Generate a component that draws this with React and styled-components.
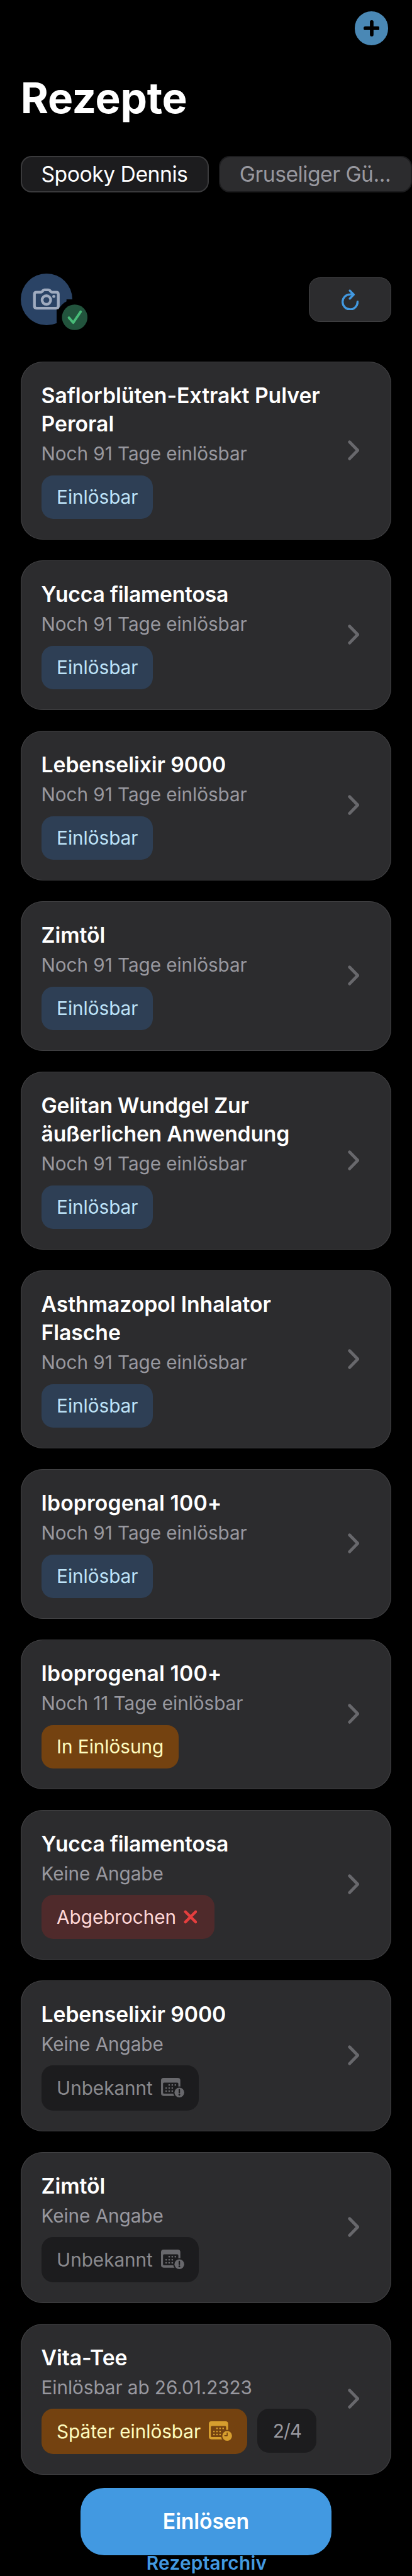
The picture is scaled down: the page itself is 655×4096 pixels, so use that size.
import React from 'react';
import styled, { createGlobalStyle } from 'styled-components';

/* All sizes are in design pixels of a 960px wide canvas. */
const u = (n) => `${(n * 0.68267).toFixed(3)}px`;

const GlobalStyle = createGlobalStyle`
  html, body { margin: 0; padding: 0; background: #000; }
  body { font-family: Inter, "Liberation Sans", sans-serif; overflow: hidden; }
  *, *::before, *::after { box-sizing: border-box; }
  svg { display: block; flex: none; }
  button { font: inherit; border: 0; padding: 0; margin: 0; }
  h1, h2, p { margin: 0; }
`;

const Screen = styled.div`
  width: 100%;
  height: ${u(6000)};
  display: flex;
  flex-direction: column;
  overflow: hidden;
  background: #000;
  color: #fff;
`;

const NavBar = styled.header`
  display: flex;
  justify-content: flex-end;
  padding: ${u(27)} ${u(55)} 0 0;
`;

const AddButton = styled.button`
  width: ${u(79)};
  height: ${u(79)};
  display: flex;
  align-items: center;
  justify-content: center;
  border-radius: 50%;
  background: #4a88b5;
`;

const PageTitle = styled.h1`
  margin: ${u(63)} 0 0 ${u(48)};
  font-size: ${u(98.8)};
  line-height: ${u(120)};
  font-weight: 700;
  letter-spacing: -0.004em;
`;

const ProfileTabs = styled.nav`
  display: flex;
  gap: ${u(24)};
  margin-top: ${u(75)};
  padding-left: ${u(48)};
`;

const ProfileTab = styled.button`
  flex: none;
  width: ${(p) => u(p.$selected ? 438 : 449.5)};
  height: ${u(85)};
  padding-left: ${u(45)};
  border: ${u(3)} solid ${(p) => (p.$selected ? '#3a3a3c' : '#1c1c1e')};
  border-radius: ${u(25)};
  background: ${(p) => (p.$selected ? '#1c1c1e' : '#2c2c2e')};
  color: ${(p) => (p.$selected ? '#fff' : '#98989f')};
  font-size: ${u(49.4)};
  line-height: ${u(79)};
  letter-spacing: -0.015em;
  text-align: left;
  white-space: nowrap;
`;

const StatusRow = styled.div`
  display: flex;
  justify-content: space-between;
  align-items: center;
  height: ${u(120)};
  margin-top: ${u(189)};
  padding: 0 ${u(48)};
`;

const Avatar = styled.div`
  position: relative;
  width: ${u(120)};
  height: ${u(120)};
  border-radius: 50%;
  background: #2a4365;
`;

const AvatarBadge = styled.svg`
  position: absolute;
  left: ${u(84)};
  top: ${u(60)};
`;

const RefreshButton = styled.button`
  width: ${u(192)};
  height: ${u(104)};
  display: flex;
  align-items: center;
  justify-content: center;
  border: 1px solid #444446;
  border-radius: ${u(26)};
  background: #2c2c2e;
`;

const CardList = styled.main`
  display: flex;
  flex-direction: column;
  gap: ${u(48)};
  margin-top: ${u(84)};
  padding: 0 ${u(48)};
`;

const Card = styled.article`
  display: flex;
  align-items: center;
  justify-content: space-between;
  padding: ${u(46)} ${u(75)} ${u(48)} ${u(48)};
  border-radius: ${u(51)};
  background: #2c2c2e;
  box-shadow: inset 0 0 0 1px #414143;
`;

const CardBody = styled.div`
  width: ${u(672)};
`;

const CardTitle = styled.h2`
  font-size: ${u(49.4)};
  line-height: ${u(66)};
  font-weight: 600;
  letter-spacing: ${(p) => p.$tracking ?? -0.002}em;
`;

const CardHint = styled.p`
  margin-top: ${u(7)};
  color: #98989f;
  font-size: ${u(43.6)};
  line-height: ${u(60)};
  letter-spacing: -0.003em;
`;

const TagRow = styled.div`
  display: flex;
  align-items: flex-start;
  gap: ${u(24)};
  margin-top: ${u(20)};
`;

const tones = {
  blue: ['#2e3f55', '#bee3f8'],
  orange: ['#744210', '#fefcbf'],
  red: ['#4f2a2b', '#fed7d7'],
  gray: ['#1c1c1e', '#8a8a8e'],
  count: ['#1c1c1e', '#98989f'],
};

const Tag = styled.span`
  display: flex;
  align-items: center;
  height: ${(p) => u(p.$tall ? 105 : 102)};
  padding: 0 ${(p) => u(p.$tone === 'red' ? 40 : 35)} 0 ${u(36)};
  gap: ${(p) => u(p.$tone === 'red' ? 17 : 19)};
  border-radius: ${u(27)};
  background: ${(p) => tones[p.$tone][0]};
  color: ${(p) => tones[p.$tone][1]};
  font-size: ${u(43.6)};
  letter-spacing: ${(p) => (p.$tone === 'count' ? '-0.03em' : '-0.002em')};
  white-space: nowrap;
`;

const RedeemButton = styled.button`
  align-self: center;
  width: ${u(585)};
  height: ${u(156)};
  flex: none;
  margin-top: ${u(31)};
  border-radius: ${u(55)};
  background: #4299e1;
  color: #fff;
  font-size: ${u(49.4)};
  line-height: ${u(156)};
  font-weight: 600;
  letter-spacing: -0.004em;
  text-align: center;
`;

const ArchiveLink = styled.div`
  height: ${u(48)};
  padding-left: ${u(3)};
  color: #4299e1;
  font-size: ${u(43.6)};
  line-height: ${u(38)};
  font-weight: 600;
  letter-spacing: 0.009em;
  text-align: center;
`;

const dim = (w, h) => ({ width: w * 0.68267, height: h * 0.68267 });

const PlusIcon = () => (
  <svg {...dim(38, 38)} viewBox="0 0 38 38" stroke="#000" strokeWidth="8.4" strokeLinecap="round">
    <path d="M19 4.2V33.8M4.2 19H33.8" />
  </svg>
);

const CameraIcon = () => (
  <svg {...dim(120, 120)} viewBox="55 54 360 360" fill="none" stroke="#9fabbf" strokeWidth="19" strokeLinejoin="round">
    <path d="M165 184.500H192C198 184.500 201 183 205 179L210 173C214 169 216 168 221 168H248C253 168 255 169 259 173L264 179C268 183 271 184.500 277 184.500H303Q317.500 184.500 317.500 199V282Q317.500 296.500 303 296.500H165Q150.500 296.500 150.500 282V199Q150.500 184.500 165 184.500Z" />
    <circle cx="234" cy="239" r="30" />
    <circle cx="286" cy="214" r="10.500" fill="#9fabbf" stroke="none" />
  </svg>
);

const CheckBadge = () => (
  <AvatarBadge {...dim(84, 84)} viewBox="306 234 252 252">
    <circle cx="432" cy="360" r="126" fill="#000" />
    <path d="M306 303H558V398H306ZM375 234H489V486H375Z" fill="#000" />
    <circle cx="432.500" cy="359.500" r="89" fill="#22543d" />
    <path d="M392 362L422 397L474 320" fill="none" stroke="#48bb78" strokeWidth="17" strokeLinecap="round" strokeLinejoin="round" />
  </AvatarBadge>
);

const RefreshIcon = () => (
  <svg {...dim(40, 48.7)} viewBox="288 130 120 146" fill="none" stroke="#4299e1" strokeWidth="15" strokeLinecap="round" strokeLinejoin="round">
    <path d="M400 217A52.500 52.500 0 1 1 347.500 165.500Q358 164 371 167" />
    <path d="M346 139.500L373 167L346 194.500" />
  </svg>
);

const Chevron = () => (
  <svg {...dim(27, 47)} viewBox="0 0 27 47" fill="none" stroke="#68686c" strokeWidth="7" strokeLinecap="round" strokeLinejoin="round">
    <path d="M4 4L23 23.500L4 43" />
  </svg>
);

const CrossIcon = () => (
  <svg {...dim(32, 32)} viewBox="0 0 32 32" stroke="#e53e3e" strokeWidth="6.500" strokeLinecap="round">
    <path d="M4 4L28 28M28 4L4 28" />
  </svg>
);

const dots = [[99, 110], [120.5, 110], [142, 110], [78, 131], [99, 131], [120.5, 131], [78, 152.5], [99, 152.5], [120.5, 152.5]];

const CalendarIcon = ({ color, back, clock }) => (
  <svg {...dim(54, 49)} viewBox="42 60 162 147">
    <path fill={color} fillRule="evenodd" d="M60 60H159Q177 60 177 78V168Q177 186 159 186H60Q42 186 42 168V78Q42 60 60 60ZM63 93Q56 93 56 100V163Q56 170 63 170H156Q163 170 163 163V100Q163 93 156 93Z" />
    {dots.map(([x, y]) => (
      <rect key={`${x}-${y}`} x={x - 5.5} y={y - 5.5} width="11" height="11" rx="3.500" fill={color} />
    ))}
    <circle cx="170" cy="162" r="43" fill={back} />
    <circle cx="170" cy="162" r="34" fill={color} />
    {clock ? (
      <path d="M170 142V160.500H153" fill="none" stroke={back} strokeWidth="7" strokeLinecap="round" strokeLinejoin="round" />
    ) : (
      <>
        <path d="M170 143V163" stroke={back} strokeWidth="10" strokeLinecap="round" />
        <circle cx="170" cy="178" r="6.500" fill={back} />
      </>
    )}
  </svg>
);

const icons = {
  cross: <CrossIcon />,
  unknown: <CalendarIcon color="#68686c" back="#1c1c1e" />,
  later: <CalendarIcon color="#d69e2e" back="#744210" clock />,
};

const left91 = 'Noch 91 Tage einlösbar';
const redeemable = { text: 'Einlösbar', tone: 'blue' };
const unknown = { text: 'Unbekannt', tone: 'gray', icon: 'unknown', tall: true };

const prescriptions = [
  { title: 'Saflorblüten-Extrakt Pulver Peroral', hint: left91, tags: [redeemable], tracking: -0.001 },
  { title: 'Yucca filamentosa', hint: left91, tags: [redeemable], tracking: -0.008 },
  { title: 'Lebenselixir 9000', hint: left91, tags: [redeemable] },
  { title: 'Zimtöl', hint: left91, tags: [redeemable] },
  { title: 'Gelitan Wundgel Zur äußerlichen Anwendung', hint: left91, tags: [redeemable], tracking: -0.007 },
  { title: 'Asthmazopol Inhalator Flasche', hint: left91, tags: [redeemable] },
  { title: 'Iboprogenal 100+', hint: left91, tags: [redeemable], tracking: 0.004 },
  { title: 'Iboprogenal 100+', hint: 'Noch 11 Tage einlösbar', tags: [{ text: 'In Einlösung', tone: 'orange' }], tracking: 0.004 },
  { title: 'Yucca filamentosa', hint: 'Keine Angabe', tags: [{ text: 'Abgebrochen', tone: 'red', icon: 'cross' }], tracking: -0.008 },
  { title: 'Lebenselixir 9000', hint: 'Keine Angabe', tags: [unknown] },
  { title: 'Zimtöl', hint: 'Keine Angabe', tags: [unknown] },
  {
    title: 'Vita-Tee',
    hint: 'Einlösbar ab 26.01.2323',
    tags: [
      { text: 'Später einlösbar', tone: 'orange', icon: 'later', tall: true },
      { text: '2/4', tone: 'count' },
    ],
  },
];

const PrescriptionCard = ({ title, hint, tags, tracking }) => (
  <Card>
    <CardBody>
      <CardTitle $tracking={tracking}>{title}</CardTitle>
      <CardHint>{hint}</CardHint>
      <TagRow>
        {tags.map((t) => (
          <Tag key={t.text} $tone={t.tone} $tall={t.tall}>
            {t.text}
            {t.icon && icons[t.icon]}
          </Tag>
        ))}
      </TagRow>
    </CardBody>
    <Chevron />
  </Card>
);

export default function App() {
  return (
    <>
      <GlobalStyle />
      <Screen>
        <NavBar>
          <AddButton aria-label="Hinzufügen"><PlusIcon /></AddButton>
        </NavBar>
        <PageTitle>Rezepte</PageTitle>
        <ProfileTabs>
          <ProfileTab $selected>Spooky Dennis</ProfileTab>
          <ProfileTab>Gruseliger Gü...</ProfileTab>
        </ProfileTabs>
        <StatusRow>
          <Avatar>
            <CameraIcon />
            <CheckBadge />
          </Avatar>
          <RefreshButton aria-label="Aktualisieren"><RefreshIcon /></RefreshButton>
        </StatusRow>
        <CardList>
          {prescriptions.map((p, i) => (
            <PrescriptionCard key={i} {...p} />
          ))}
        </CardList>
        <RedeemButton>Einlösen</RedeemButton>
        <ArchiveLink>Rezeptarchiv</ArchiveLink>
      </Screen>
    </>
  );
}
